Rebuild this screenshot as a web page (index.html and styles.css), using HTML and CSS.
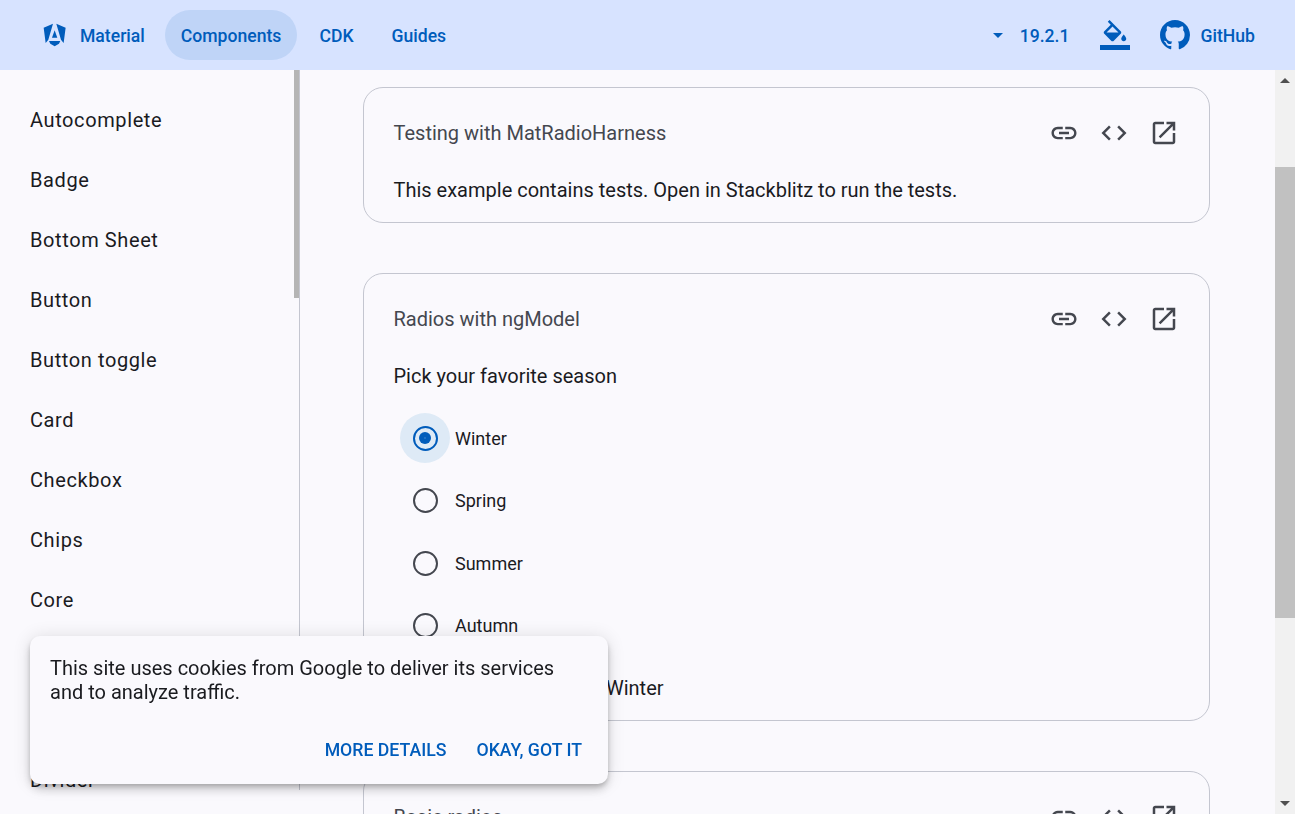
FILE: index.html
```html
<!DOCTYPE html>
<html>

<head>
    <meta name="viewport" content="width=device-width, initial-scale=1" />
    <title>Radio button | Angular Material</title>
    <link rel="stylesheet" href="styles.css">
</head>

<body>
    <nav class="navbar">
        <a class="nav-link nav-home">
            <svg class="logo" viewBox="0 0 70 72"><path d="M2 14 30 2 16 50 8 60zM68 14 40 2 54 50 62 60zM27 44h16L35 22zM18 54h34l-4 8-13 8-13-8z"/></svg>
            <span class="nav-text">Material</span>
        </a>
        <a class="nav-link active"><span class="nav-text">Components</span></a>
        <a class="nav-link"><span class="nav-text">CDK</span></a>
        <a class="nav-link"><span class="nav-text">Guides</span></a>
        <div class="spacer"></div>
        <a class="nav-version"><span class="caret"></span><span class="nav-text">19.2.1</span></a>
        <svg class="nav-icon theme-icon" viewBox="0 0 24 24"><path d="M16.56 8.94 7.62 0 6.21 1.41l2.38 2.38-5.15 5.15c-.59.59-.59 1.54 0 2.12l5.5 5.5c.29.29.68.44 1.06.44s.77-.15 1.06-.44l5.5-5.5c.59-.58.59-1.53 0-2.12zM5.21 10 10 5.21 14.79 10H5.21zM19 11.5s-2 2.17-2 3.5c0 1.1.9 2 2 2s2-.9 2-2c0-1.33-2-3.5-2-3.5z"/><path d="M0 20h24v4H0z"/></svg>
        <a class="nav-github">
            <svg class="nav-icon" viewBox="0 0 16 16"><path d="M8 0C3.58 0 0 3.58 0 8c0 3.54 2.29 6.53 5.47 7.59.4.07.55-.17.55-.38 0-.19-.01-.82-.01-1.49-2.01.37-2.53-.49-2.69-.94-.09-.23-.48-.94-.82-1.13-.28-.15-.68-.52-.01-.53.63-.01 1.08.58 1.23.82.72 1.21 1.87.87 2.33.66.07-.52.28-.87.51-1.07-1.78-.2-3.64-.89-3.64-3.95 0-.87.31-1.59.82-2.15-.08-.2-.36-1.02.08-2.12 0 0 .67-.21 2.2.82.64-.18 1.32-.27 2-.27s1.36.09 2 .27c1.53-1.04 2.2-.82 2.2-.82.44 1.1.16 1.92.08 2.12.51.56.82 1.27.82 2.15 0 3.07-1.87 3.75-3.65 3.95.29.25.54.73.54 1.48 0 1.07-.01 1.93-.01 2.2 0 .21.15.46.55.38A8.01 8.01 0 0 0 16 8c0-4.42-3.58-8-8-8z"/></svg>
            <span class="nav-text">GitHub</span>
        </a>
    </nav>

    <div class="page">
        <aside class="sidenav">
            <div class="sidenav-list">
                <a class="sidenav-item">Autocomplete</a>
                <a class="sidenav-item">Badge</a>
                <a class="sidenav-item">Bottom Sheet</a>
                <a class="sidenav-item">Button</a>
                <a class="sidenav-item">Button toggle</a>
                <a class="sidenav-item">Card</a>
                <a class="sidenav-item">Checkbox</a>
                <a class="sidenav-item">Chips</a>
                <a class="sidenav-item">Core</a>
                <a class="sidenav-item">Datepicker</a>
                <a class="sidenav-item">Dialog</a>
                <a class="sidenav-item">Divider</a>
            </div>
            <div class="sidenav-thumb"></div>
        </aside>

        <main class="content">
            <section class="card card-test">
                <header class="card-head">
                    <span class="card-title">Testing with MatRadioHarness</span>
                    <span class="card-actions">
                        <svg class="action" viewBox="0 0 24 24"><path d="M3.9 12c0-1.71 1.39-3.1 3.1-3.1h4V7H7c-2.76 0-5 2.24-5 5s2.24 5 5 5h4v-1.9H7c-1.71 0-3.1-1.39-3.1-3.1zM8 13h8v-2H8v2zm9-6h-4v1.9h4c1.71 0 3.1 1.39 3.1 3.1s-1.39 3.1-3.1 3.1h-4V17h4c2.76 0 5-2.24 5-5s-2.24-5-5-5z"/></svg>
                        <svg class="action" viewBox="0 0 24 24"><path d="M9.4 16.6 4.8 12l4.6-4.6L8 6l-6 6 6 6 1.4-1.4zm5.2 0 4.6-4.6-4.6-4.6L16 6l6 6-6 6-1.4-1.4z"/></svg>
                        <svg class="action" viewBox="0 0 24 24"><path d="M19 19H5V5h7V3H5c-1.11 0-2 .9-2 2v14c0 1.1.89 2 2 2h14c1.1 0 2-.9 2-2v-7h-2v7zM14 3v2h3.59l-9.83 9.83 1.41 1.41L19 6.41V10h2V3h-7z"/></svg>
                    </span>
                </header>
                <p class="card-text">This example contains tests. Open in Stackblitz to run the tests.</p>
            </section>

            <section class="card card-model">
                <header class="card-head">
                    <span class="card-title">Radios with ngModel</span>
                    <span class="card-actions">
                        <svg class="action" viewBox="0 0 24 24"><path d="M3.9 12c0-1.71 1.39-3.1 3.1-3.1h4V7H7c-2.76 0-5 2.24-5 5s2.24 5 5 5h4v-1.9H7c-1.71 0-3.1-1.39-3.1-3.1zM8 13h8v-2H8v2zm9-6h-4v1.9h4c1.71 0 3.1 1.39 3.1 3.1s-1.39 3.1-3.1 3.1h-4V17h4c2.76 0 5-2.24 5-5s-2.24-5-5-5z"/></svg>
                        <svg class="action" viewBox="0 0 24 24"><path d="M9.4 16.6 4.8 12l4.6-4.6L8 6l-6 6 6 6 1.4-1.4zm5.2 0 4.6-4.6-4.6-4.6L16 6l6 6-6 6-1.4-1.4z"/></svg>
                        <svg class="action" viewBox="0 0 24 24"><path d="M19 19H5V5h7V3H5c-1.11 0-2 .9-2 2v14c0 1.1.89 2 2 2h14c1.1 0 2-.9 2-2v-7h-2v7zM14 3v2h3.59l-9.83 9.83 1.41 1.41L19 6.41V10h2V3h-7z"/></svg>
                    </span>
                </header>
                <p class="card-text">Pick your favorite season</p>
                <div class="radio-group">
                    <div class="radio-row"><span class="radio-touch selected"><span class="radio-ring"><span class="radio-dot"></span></span></span>Winter</div>
                    <div class="radio-row"><span class="radio-touch"><span class="radio-ring"></span></span>Spring</div>
                    <div class="radio-row"><span class="radio-touch"><span class="radio-ring"></span></span>Summer</div>
                    <div class="radio-row"><span class="radio-touch"><span class="radio-ring"></span></span>Autumn</div>
                </div>
                <p class="card-text season-result">Your favorite season is: Winter</p>
            </section>

            <section class="card card-basic">
                <header class="card-head">
                    <span class="card-title">Basic radios</span>
                    <span class="card-actions">
                        <svg class="action" viewBox="0 0 24 24"><path d="M3.9 12c0-1.71 1.39-3.1 3.1-3.1h4V7H7c-2.76 0-5 2.24-5 5s2.24 5 5 5h4v-1.9H7c-1.71 0-3.1-1.39-3.1-3.1zM8 13h8v-2H8v2zm9-6h-4v1.9h4c1.71 0 3.1 1.39 3.1 3.1s-1.39 3.1-3.1 3.1h-4V17h4c2.76 0 5-2.24 5-5s-2.24-5-5-5z"/></svg>
                        <svg class="action" viewBox="0 0 24 24"><path d="M9.4 16.6 4.8 12l4.6-4.6L8 6l-6 6 6 6 1.4-1.4zm5.2 0 4.6-4.6-4.6-4.6L16 6l6 6-6 6-1.4-1.4z"/></svg>
                        <svg class="action" viewBox="0 0 24 24"><path d="M19 19H5V5h7V3H5c-1.11 0-2 .9-2 2v14c0 1.1.89 2 2 2h14c1.1 0 2-.9 2-2v-7h-2v7zM14 3v2h3.59l-9.83 9.83 1.41 1.41L19 6.41V10h2V3h-7z"/></svg>
                    </span>
                </header>
            </section>
        </main>

        <div class="scrollbar">
            <span class="arrow arrow-up"></span>
            <div class="scroll-track"><div class="scroll-thumb"></div></div>
            <span class="arrow arrow-down"></span>
        </div>
    </div>

    <div class="cookie-popup">
        <p class="cookie-text">This site uses cookies from Google to deliver its services and to analyze traffic.</p>
        <div class="cookie-actions">
            <a class="cookie-btn">More details</a>
            <a class="cookie-btn">Okay, got it</a>
        </div>
    </div>
</body>

</html>
```

FILE: styles.css
```css
html, body {
    height: 100%;
}

body {
    margin: 0;
    overflow: hidden;
    font-family: Roboto, sans-serif;
    background-color: #faf9fd;
    color: #1a1b1f;
}

p {
    margin: 0;
}

/* top bar */
.navbar {
    height: 70px;
    box-sizing: border-box;
    display: flex;
    align-items: center;
    padding: 0 40px 0 28.3px;
    background-color: #d7e3ff;
    color: #005cbb;
    font-size: 17.6px;
    font-weight: 500;
}

.nav-text {
    padding-top: 2px;
}

.nav-link {
    display: flex;
    align-items: center;
    height: 50px;
    padding: 0 15.5px 0 16px;
    margin-right: 6.5px;
    border-radius: 25px;
}

.nav-home {
    padding: 0 15px;
    margin-right: 5px;
}

.logo {
    width: 23.3px;
    height: 24px;
    margin-right: 13.4px;
    fill: #005cbb;
}

.active {
    background-color: #bfd4f7;
}

.spacer {
    flex: 1;
}

.nav-version {
    display: flex;
    align-items: center;
    margin-right: 30.5px;
}

.caret {
    width: 0;
    height: 0;
    margin-right: 16.5px;
    border-left: 5px solid transparent;
    border-right: 5px solid transparent;
    border-top: 5px solid #005cbb;
}

.nav-icon {
    width: 30px;
    height: 30px;
    fill: #005cbb;
}

.theme-icon {
    margin-right: 30px;
}

.nav-github {
    display: flex;
    align-items: center;
    gap: 10.5px;
}

/* page */
.page {
    display: flex;
    height: 744px;
}

.sidenav {
    width: 300px;
    height: 720px;
    box-sizing: border-box;
    flex: none;
    display: flex;
    justify-content: space-between;
    overflow: hidden;
    border-right: 1px solid #c4c6d0;
}

.sidenav-list {
    padding-top: 20px;
}

.sidenav-item {
    display: block;
    height: 60px;
    line-height: 60px;
    padding-left: 30px;
    font-size: 20px;
    letter-spacing: 0.6px;
    white-space: nowrap;
}

.sidenav-thumb {
    width: 5px;
    height: 228px;
    background-color: #b5b5b5;
}

.content {
    flex: 1;
    overflow: hidden;
    padding: 17px 65px 0 63px;
}

/* example cards */
.card {
    box-sizing: border-box;
    margin-bottom: 50px;
    padding: 0 30px 0 29.5px;
    border: 1px solid #c4c6d0;
    border-radius: 20px;
}

.card-test {
    height: 136px;
}

.card-model {
    height: 448px;
}

.card-head {
    display: flex;
    align-items: center;
    justify-content: space-between;
    height: 90px;
}

.card-title {
    font-size: 20px;
    color: #44474f;
}

.card-actions {
    display: flex;
    gap: 20px;
}

.action {
    width: 30px;
    height: 30px;
    fill: #44474f;
}

.card-text {
    font-size: 20px;
    line-height: 24px;
}

.radio-group {
    margin-top: 19px;
}

.radio-row {
    display: flex;
    align-items: center;
    height: 62.5px;
    margin-left: 6.5px;
    font-size: 18px;
}

.radio-touch {
    display: flex;
    align-items: center;
    justify-content: center;
    width: 50px;
    height: 50px;
    margin-right: 5px;
    border-radius: 50%;
}

.radio-touch.selected {
    background-color: #deeaf6;
}

.radio-ring {
    display: flex;
    align-items: center;
    justify-content: center;
    box-sizing: border-box;
    width: 25px;
    height: 25px;
    border: 2px solid #44474f;
    border-radius: 50%;
}

.selected .radio-ring {
    border-color: #005cbb;
}

.radio-dot {
    width: 12px;
    height: 12px;
    border-radius: 50%;
    background: radial-gradient(circle, #3f86d0 0 0.4px, #005cbb 1px);
}

.season-result {
    margin-top: 19px;
}

/* fake page scrollbar */
.scrollbar {
    width: 20px;
    flex: none;
    display: flex;
    flex-direction: column;
    align-items: center;
    background-color: #f1f1f1;
}

.arrow {
    width: 0;
    height: 0;
    border-left: 5px solid transparent;
    border-right: 5px solid transparent;
}

.arrow-up {
    margin-top: 8px;
    border-bottom: 5px solid #505050;
}

.arrow-down {
    margin-bottom: 8px;
    border-top: 5px solid #505050;
}

.scroll-track {
    flex: 1;
    align-self: stretch;
    padding-top: 84px;
}

.scroll-thumb {
    height: 451px;
    background-color: #c1c1c1;
}

/* cookie popup */
.cookie-popup {
    position: fixed;
    left: 30px;
    top: 636px;
    width: 578px;
    height: 148px;
    box-sizing: border-box;
    padding: 20px 26px 0 20px;
    border-radius: 10px;
    background-color: #faf9fd;
    box-shadow: 0 3px 5px -1px rgba(0, 0, 0, .2), 0 6px 10px 0 rgba(0, 0, 0, .14), 0 1px 18px 0 rgba(0, 0, 0, .12);
}

.cookie-text {
    font-size: 20px;
    line-height: 24px;
}

.cookie-actions {
    display: flex;
    justify-content: flex-end;
    gap: 30px;
    margin-top: 34px;
}

.cookie-btn {
    font-size: 17.7px;
    font-weight: 500;
    line-height: 24px;
    text-transform: uppercase;
    color: #005cbb;
}
```
